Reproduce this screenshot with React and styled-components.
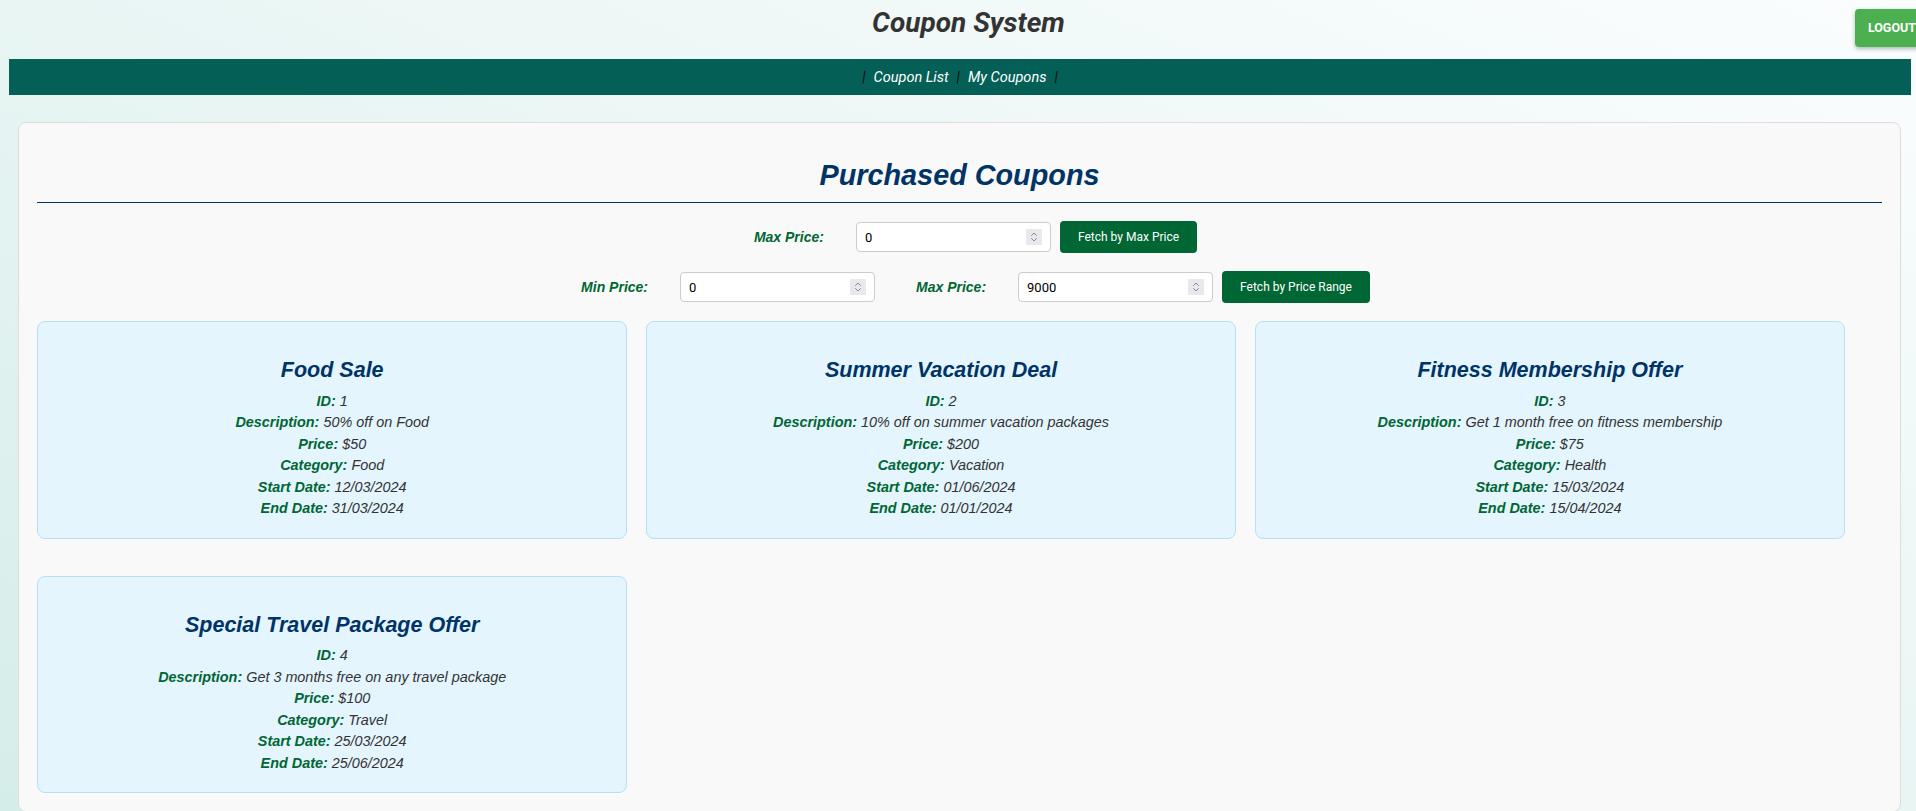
import React from "react";
import styled, { createGlobalStyle } from "styled-components";

const GlobalStyle = createGlobalStyle`
  html, body {
    margin: 0;
    padding: 0;
  }
  html {
    overflow-x: hidden;
  }
  body {
    font-family: "Liberation Sans", Arial, sans-serif;
  }
  * {
    box-sizing: border-box;
  }
`;

const Page = styled.div`
  min-height: 100vh;
  padding: 0 5px 0 9px;
  background: linear-gradient(to top right, #d5ede9 0%, #fbfdfe 100%);
  overflow: hidden;
`;

const Header = styled.header`
  position: relative;
  text-align: center;
`;

const SiteTitle = styled.h1`
  margin: 6px 0 20px;
  padding-left: 17px;
  font-family: Roboto, "Liberation Sans", sans-serif;
  font-size: 28px;
  font-weight: 700;
  font-style: italic;
  color: #333;
  line-height: normal;
`;

const LogoutButton = styled.button`
  position: absolute;
  top: 3px;
  right: -18px;
  padding: 11px 13px;
  border: none;
  border-radius: 4px;
  background: #4caf50;
  color: #fff;
  font-family: Roboto, "Liberation Sans", sans-serif;
  font-size: 12.5px;
  font-weight: 700;
  line-height: 16px;
  text-transform: uppercase;
  box-shadow: 0 2px 4px rgba(0, 0, 0, 0.28);
  cursor: pointer;
`;

const NavBar = styled.nav`
  height: 36px;
  background: #045f57;
  display: flex;
  align-items: center;
  justify-content: center;
  gap: 8px;
  font-family: Roboto, "Liberation Sans", sans-serif;
  font-size: 14.5px;
  font-style: italic;
`;

const NavSep = styled.span`
  color: #0b0b0b;
`;

const NavLink = styled.a`
  color: #fff;
  font-weight: 400;
  text-decoration: none;
  cursor: pointer;
`;

const Panel = styled.main`
  margin: 27px 10px 0 9px;
  padding: 18px;
  background: #f9f9f9;
  border: 1px solid #ddd;
  border-radius: 8px;
`;

const Heading = styled.h2`
  margin: 18px 0 18px;
  padding-bottom: 10px;
  border-bottom: 1px solid #003366;
  text-align: center;
  font-size: 28.8px;
  font-weight: 700;
  font-style: italic;
  color: #003366;
  line-height: normal;
`;

const FilterRow = styled.div`
  display: flex;
  align-items: center;
  justify-content: center;
  margin-bottom: 18px;
`;

const FilterLabel = styled.label`
  margin: 0 32px;
  font-size: 14px;
  font-weight: 700;
  font-style: italic;
  color: #006633;
  white-space: nowrap;
`;

const InputBox = styled.div`
  width: 195px;
  height: 30px;
  margin-right: 9px;
  display: flex;
  align-items: center;
  padding: 0 8px;
  background: #fff;
  border: 1px solid #ccc;
  border-radius: 4px;
`;

const NumberInput = styled.input`
  flex: 1;
  min-width: 0;
  border: none;
  outline: none;
  background: transparent;
  padding: 0;
  font-family: Roboto, "Liberation Sans", sans-serif;
  font-size: 13px;
  color: #000;
`;

const Spinner = styled.span`
  width: 16px;
  height: 16px;
  display: flex;
  align-items: center;
  justify-content: center;
  background: #e9e9ed;
  border-radius: 1px;
`;

const FetchButton = styled.button`
  height: 32px;
  padding: 0 18px;
  border: none;
  border-radius: 4px;
  background: #006633;
  color: #fff;
  font-family: Roboto, "Liberation Sans", sans-serif;
  font-size: 12px;
  white-space: nowrap;
  cursor: pointer;
`;

const CardGrid = styled.div`
  display: flex;
  flex-wrap: wrap;
  column-gap: 1%;
  row-gap: 37px;
`;

const Card = styled.div`
  flex: 0 0 32%;
  padding: 18px 18px 16px;
  background: #e4f5fe;
  border: 1px solid #b6dff6;
  border-radius: 8px;
  text-align: center;
`;

const CardTitle = styled.h3`
  margin: 18px 0 10px;
  font-size: 21.5px;
  font-weight: 700;
  font-style: italic;
  color: #003366;
  line-height: 24.7px;
`;

const CardLine = styled.p`
  margin: 5px 0;
  font-size: 14.4px;
  font-style: italic;
  color: #333;
  line-height: 16.5px;
`;

const FieldName = styled.strong`
  font-weight: 700;
  color: #006633;
`;

const SpinIcon = () => (
  <svg width="10" height="14" viewBox="0 0 10 14" fill="none" stroke="#8a8a8a" strokeWidth="1" strokeLinecap="round" strokeLinejoin="round">
    <path d="M2.5 5.5 L5 3 L7.5 5.5" />
    <path d="M2.5 8.5 L5 11 L7.5 8.5" />
  </svg>
);

const PriceInput = ({ value }) => (
  <InputBox>
    <NumberInput type="text" inputMode="numeric" defaultValue={value} />
    <Spinner>
      <SpinIcon />
    </Spinner>
  </InputBox>
);

const coupons = [
  {
    id: 1,
    title: "Food Sale",
    description: "50% off on Food",
    price: 50,
    category: "Food",
    start: "12/03/2024",
    end: "31/03/2024",
  },
  {
    id: 2,
    title: "Summer Vacation Deal",
    description: "10% off on summer vacation packages",
    price: 200,
    category: "Vacation",
    start: "01/06/2024",
    end: "01/01/2024",
  },
  {
    id: 3,
    title: "Fitness Membership Offer",
    description: "Get 1 month free on fitness membership",
    price: 75,
    category: "Health",
    start: "15/03/2024",
    end: "15/04/2024",
  },
  {
    id: 4,
    title: "Special Travel Package Offer",
    description: "Get 3 months free on any travel package",
    price: 100,
    category: "Travel",
    start: "25/03/2024",
    end: "25/06/2024",
  },
];

export default function App() {
  return (
    <>
      <GlobalStyle />
      <Page>
        <Header>
          <SiteTitle>Coupon System</SiteTitle>
          <LogoutButton>Logout</LogoutButton>
        </Header>
        <NavBar>
          <NavSep>|</NavSep>
          <NavLink>Coupon List</NavLink>
          <NavSep>|</NavSep>
          <NavLink>My Coupons</NavLink>
          <NavSep>|</NavSep>
        </NavBar>
        <Panel>
          <Heading>Purchased Coupons</Heading>
          <FilterRow>
            <FilterLabel>Max Price:</FilterLabel>
            <PriceInput value="0" />
            <FetchButton>Fetch by Max Price</FetchButton>
          </FilterRow>
          <FilterRow>
            <FilterLabel>Min Price:</FilterLabel>
            <PriceInput value="0" />
            <FilterLabel>Max Price:</FilterLabel>
            <PriceInput value="9000" />
            <FetchButton>Fetch by Price Range</FetchButton>
          </FilterRow>
          <CardGrid>
            {coupons.map((c) => (
              <Card key={c.id}>
                <CardTitle>{c.title}</CardTitle>
                <CardLine>
                  <FieldName>ID:</FieldName> {c.id}
                </CardLine>
                <CardLine>
                  <FieldName>Description:</FieldName> {c.description}
                </CardLine>
                <CardLine>
                  <FieldName>Price:</FieldName> ${c.price}
                </CardLine>
                <CardLine>
                  <FieldName>Category:</FieldName> {c.category}
                </CardLine>
                <CardLine>
                  <FieldName>Start Date:</FieldName> {c.start}
                </CardLine>
                <CardLine>
                  <FieldName>End Date:</FieldName> {c.end}
                </CardLine>
              </Card>
            ))}
          </CardGrid>
        </Panel>
      </Page>
    </>
  );
}
